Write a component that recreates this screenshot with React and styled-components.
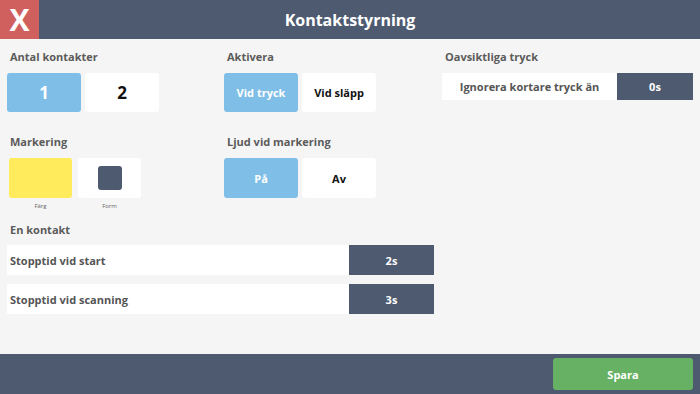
import React from "react";
import styled, { createGlobalStyle } from "styled-components";

const GlobalStyle = createGlobalStyle`
  * { box-sizing: border-box; }
  html, body { margin: 0; padding: 0; }
  body {
    font-family: "Open Sans", "Liberation Sans", sans-serif;
    background: #f5f5f5;
  }
`;

const App = () => {
  return (
    <Page>
      <GlobalStyle />
      <Header>
        <CloseButton>X</CloseButton>
        <Title>Kontaktstyrning</Title>
      </Header>

      <Main>
        <Section>
          <Label>Antal kontakter</Label>
          <Choices>
            <Choice $active $big>1</Choice>
            <Choice $big>2</Choice>
          </Choices>
        </Section>
        <Section>
          <Label>Aktivera</Label>
          <Choices>
            <Choice $active>Vid tryck</Choice>
            <Choice>Vid släpp</Choice>
          </Choices>
        </Section>
        <Section>
          <Label>Oavsiktliga tryck</Label>
          <SettingRow $wide>
            <SettingName $center>Ignorera kortare tryck än</SettingName>
            <SettingValue $width="76px">0s</SettingValue>
          </SettingRow>
        </Section>

        <Section>
          <Label>Markering</Label>
          <Swatches>
            <SwatchItem>
              <Swatch $color="#ffeb5b" />
              <Caption>Färg</Caption>
            </SwatchItem>
            <SwatchItem>
              <Swatch $color="#ffffff">
                <ShapeIcon />
              </Swatch>
              <Caption>Form</Caption>
            </SwatchItem>
          </Swatches>
        </Section>
        <Section>
          <Label>Ljud vid markering</Label>
          <Choices $tall>
            <Choice $active>På</Choice>
            <Choice>Av</Choice>
          </Choices>
        </Section>
        <Section />

        <Section $span={2}>
          <Label>En kontakt</Label>
          <Rows>
            <SettingRow>
              <SettingName>Stopptid vid start</SettingName>
              <SettingValue $width="85px">2s</SettingValue>
            </SettingRow>
            <SettingRow>
              <SettingName>Stopptid vid scanning</SettingName>
              <SettingValue $width="85px">3s</SettingValue>
            </SettingRow>
          </Rows>
        </Section>
      </Main>

      <Footer>
        <SaveButton>Spara</SaveButton>
      </Footer>
    </Page>
  );
};

const Page = styled.div`
  height: 100vh;
  display: flex;
  flex-direction: column;
`;

const Header = styled.header`
  height: 39px;
  background: #4d5a70;
  display: flex;
  align-items: center;
`;

const CloseButton = styled.div`
  width: 39px;
  height: 39px;
  background: #d0605e;
  color: #fff;
  font-size: 30px;
  line-height: 39px;
  font-weight: 700;
  text-align: center;
`;

const Title = styled.h1`
  flex: 1;
  margin: 0 39px 0 0;
  text-align: center;
  color: #fff;
  font-size: 16px;
  font-weight: 700;
`;

const Main = styled.main`
  flex: 1;
  display: grid;
  grid-template-columns: 217px 218px 1fr;
  grid-template-rows: auto auto auto;
  align-content: start;
  row-gap: 23px;
  padding: 11px 7px 0 7px;
  & > :nth-child(n + 7) {
    margin-top: -10px;
  }
`;

const Section = styled.section`
  grid-column: span ${(p) => p.$span || 1};
  display: flex;
  flex-direction: column;
`;

const Label = styled.div`
  font-size: 11px;
  line-height: 14px;
  font-weight: 700;
  color: #5b5b5b;
  padding-left: 3px;
  margin-bottom: 9px;
`;

const Choices = styled.div`
  display: flex;
  gap: 4px;
  height: ${(p) => (p.$tall ? "40px" : "39px")};
`;

const Choice = styled.div`
  width: 74px;
  border-radius: 3px;
  background: ${(p) => (p.$active ? "#7fbee7" : "#ffffff")};
  color: ${(p) => (p.$active ? "#ffffff" : "#111111")};
  font-size: ${(p) => (p.$big ? "17px" : "11px")};
  font-weight: 700;
  display: flex;
  align-items: center;
  justify-content: center;
`;

const Swatches = styled.div`
  display: flex;
  gap: 6px;
  padding-left: 2px;
`;

const SwatchItem = styled.div`
  display: flex;
  flex-direction: column;
  align-items: center;
`;

const Swatch = styled.div`
  width: 63px;
  height: 40px;
  border-radius: 3px;
  background: ${(p) => p.$color};
  display: flex;
  align-items: center;
  justify-content: center;
`;

const ShapeIcon = styled.div`
  width: 24px;
  height: 24px;
  border-radius: 3px;
  background: #4d5a70;
`;

const Caption = styled.div`
  font-size: 6px;
  line-height: 8px;
  color: #666666;
  margin-top: 4px;
`;

const Rows = styled.div`
  width: 427px;
  display: flex;
  flex-direction: column;
  gap: 9px;
  margin-top: -1px;
`;

const SettingRow = styled.div`
  display: flex;
  height: ${(p) => (p.$wide ? "27px" : "30px")};
  background: #fff;
`;

const SettingName = styled.div`
  flex: 1;
  display: flex;
  align-items: center;
  justify-content: ${(p) => (p.$center ? "center" : "flex-start")};
  padding-left: ${(p) => (p.$center ? "0" : "3px")};
  font-size: 11px;
  font-weight: 700;
  color: #555;
`;

const SettingValue = styled.div`
  width: ${(p) => p.$width};
  background: #4d5a70;
  color: #fff;
  font-size: 11px;
  font-weight: 700;
  display: flex;
  align-items: center;
  justify-content: center;
`;

const Footer = styled.footer`
  height: 40px;
  background: #4d5a70;
  display: flex;
  justify-content: flex-end;
  align-items: center;
  padding-right: 7px;
`;

const SaveButton = styled.button`
  width: 140px;
  height: 32px;
  border: none;
  border-radius: 3px;
  background: #66b163;
  color: #fff;
  font-family: inherit;
  font-size: 11px;
  font-weight: 700;
`;

export default App;
